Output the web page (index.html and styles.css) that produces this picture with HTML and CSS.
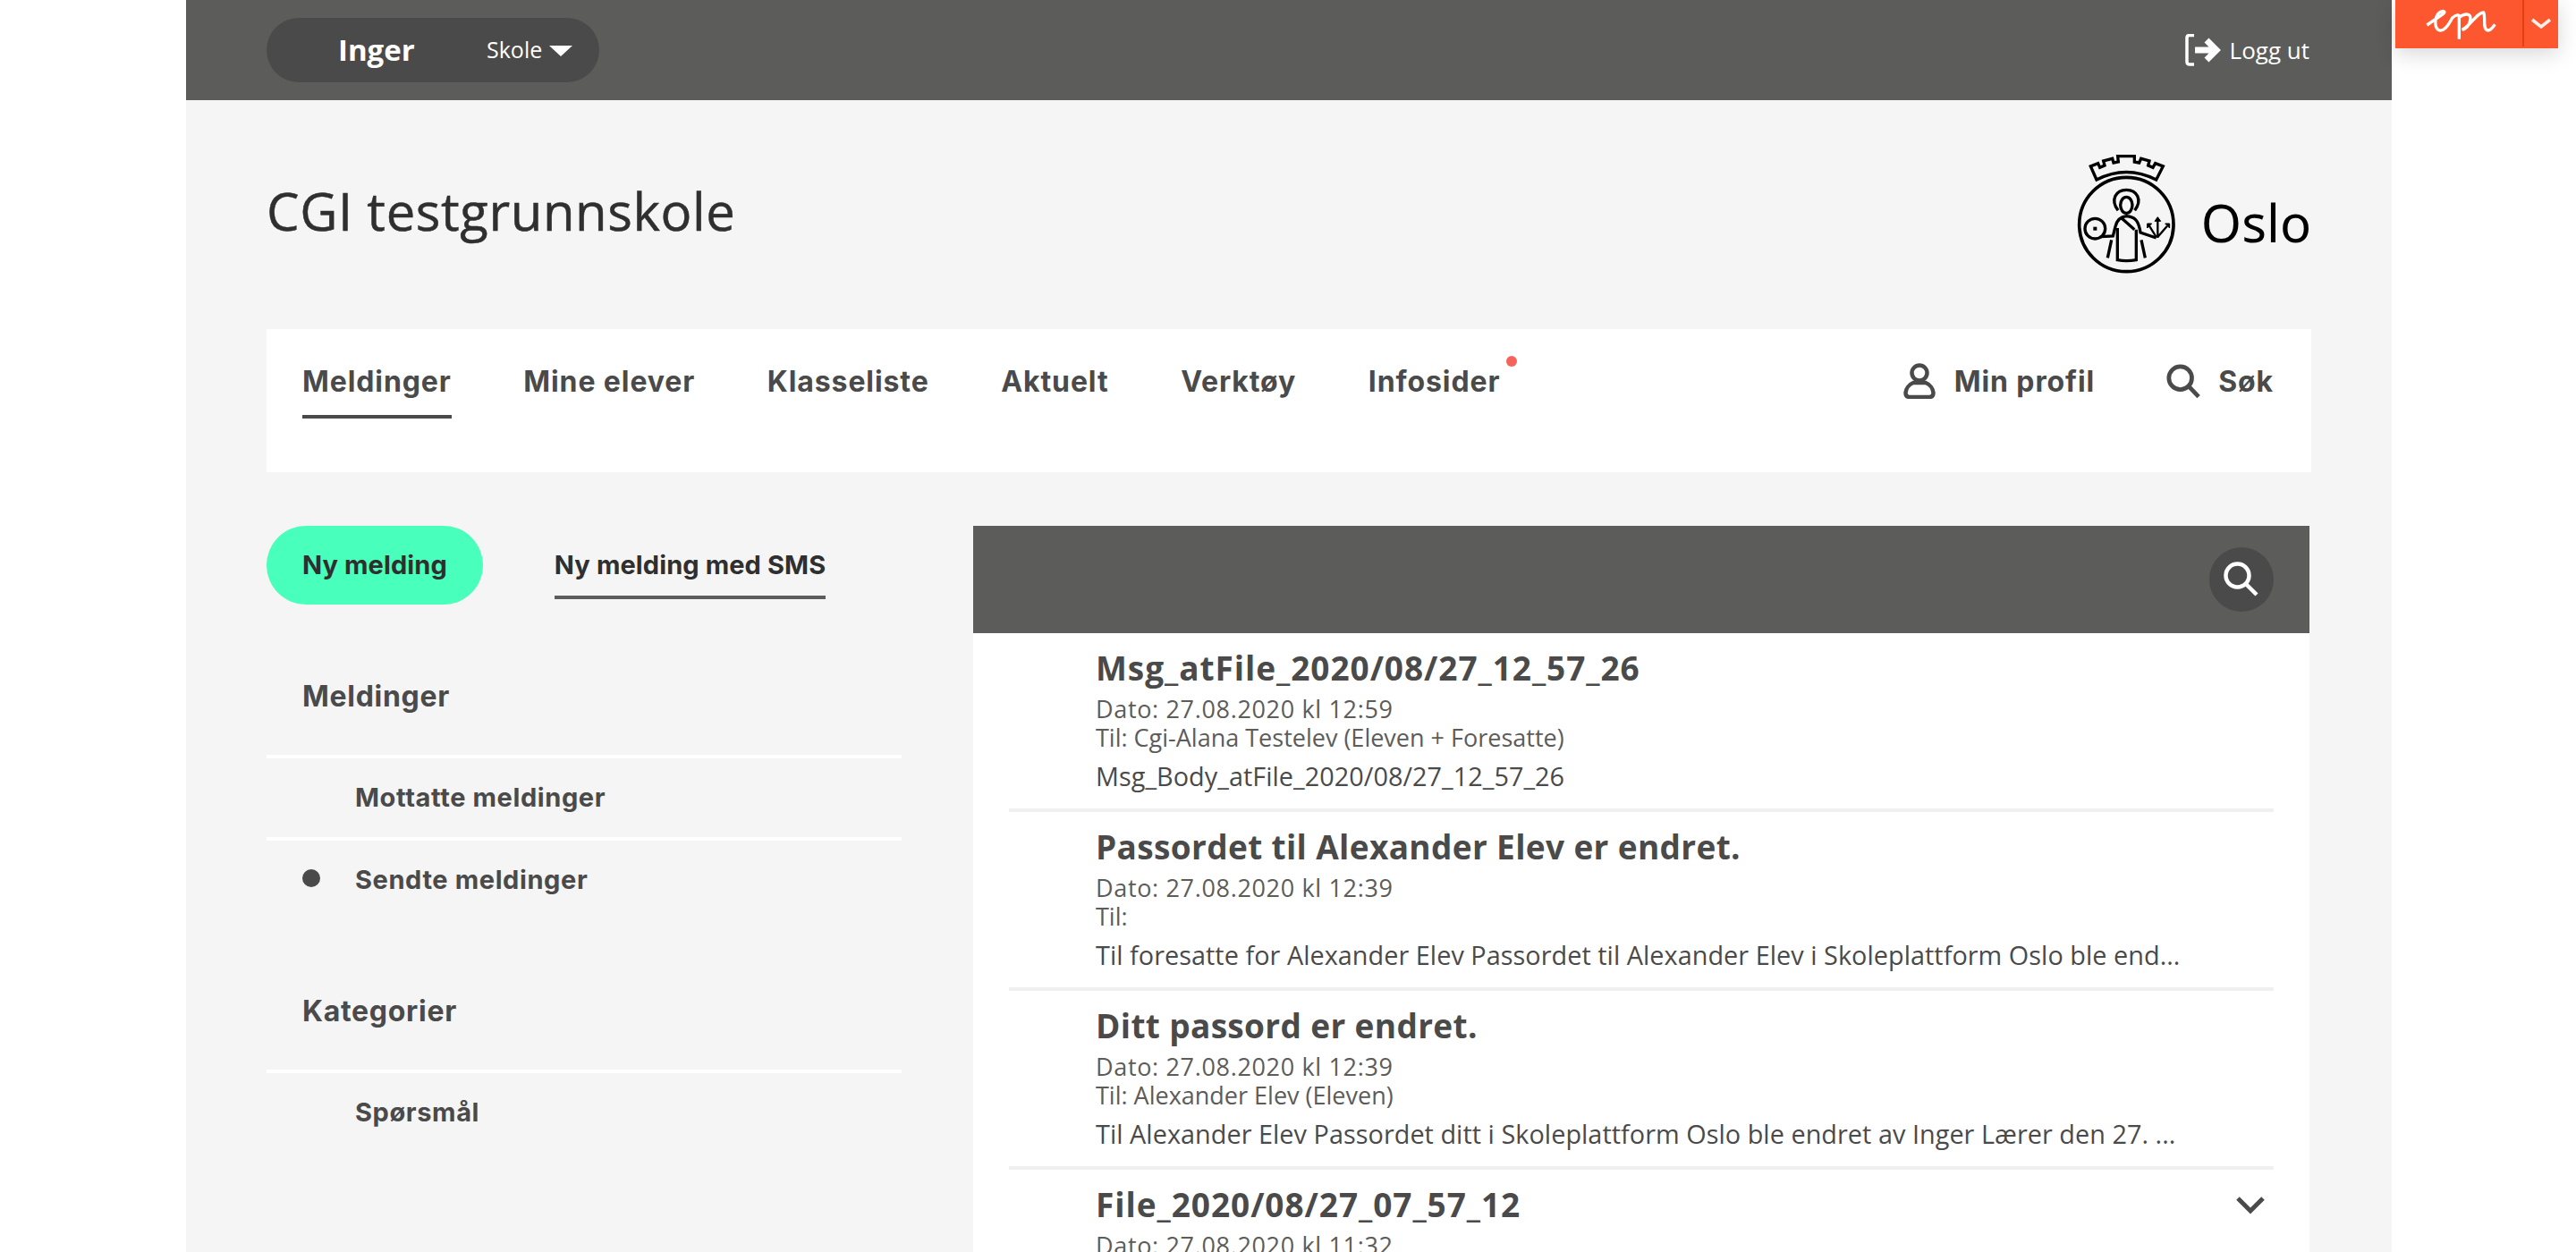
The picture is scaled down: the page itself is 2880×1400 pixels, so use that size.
FILE: index.html
```html
<!DOCTYPE html>
<html lang="no">
<head>
<meta charset="utf-8">
<title>CGI testgrunnskole</title>
<link rel="stylesheet" href="styles.css">
</head>
<body>
<div class="page">
  <header class="topbar">
    <div class="pill">
      <span class="pill-name">Inger</span>
      <span class="pill-role">Skole</span>
      <svg class="caret" viewBox="0 0 26 12"><path d="M0 0H26L13 12Z" fill="#fff"/></svg>
    </div>
    <a class="logout">
      <svg class="logout-icon" viewBox="0 0 40 36" fill="none" stroke="#fff" stroke-linejoin="miter">
        <path d="M10 1.5H5Q2 1.5 2 4.5V31Q2 34 5 34H10" stroke-width="3.5"/>
        <path d="M11 18H33M24 7L35 18L24 29" stroke-width="7"/>
      </svg>
      <span>Logg ut</span>
    </a>
  </header>

  <div class="brand">
    <h1 class="school">CGI testgrunnskole</h1>
    <div class="oslo">
      <svg class="emblem" viewBox="60 30 360 420" fill="none" stroke="#000" stroke-width="10">
        <path d="M135 123L115 78L140 68L146 82L162 75L158 60L188 52L192 66L208 63L206 44H262V63L278 66L284 52L312 60L308 75L324 82L332 68L358 78L335 123Q235 72 135 123Z"/>
        <circle cx="235" cy="273" r="158" stroke-width="11"/>
        <path d="M207 226C180 190 200 157 235 157C270 157 290 190 263 226"/>
        <ellipse cx="235" cy="208" rx="20" ry="27"/>
        <path d="M150 314L190 312L198 280C203 258 216 247 235 245C262 247 276 258 282 300L335 318M215 248L262 290"/>
        <path d="M205 285V392Q235 398 268 392V290"/>
        <path d="M185 325L172 385M285 325L298 385"/>
        <circle cx="130" cy="287" r="34"/>
        <rect x="124" y="281" width="12" height="12" fill="#000" stroke="none"/>
        <path d="M340 318V258M335 315L312 278M340 315L372 278" stroke-width="7"/>
        <path d="M330 262L340 248L350 262ZM305 285V270H320ZM365 270H380V285Z" fill="#000" stroke-width="3"/>
      </svg>
      <span class="oslo-word">Oslo</span>
    </div>
  </div>

  <nav class="mainnav">
    <ul class="nav-list">
      <li class="nav-item is-current">Meldinger</li>
      <li class="nav-item">Mine elever</li>
      <li class="nav-item">Klasseliste</li>
      <li class="nav-item">Aktuelt</li>
      <li class="nav-item">Verktøy</li>
      <li class="nav-item has-dot">Infosider</li>
    </ul>
    <div class="nav-tools">
      <a class="tool">
        <svg class="tool-icon" viewBox="0 0 36 40" fill="none" stroke="#4a4a4a" stroke-width="4.5">
          <circle cx="18" cy="11" r="8.5"/>
          <path d="M11 22H25C30 24 33 29 33.500 33C33.500 36 32 38 29 38H7C4 38 2.500 36 2.500 33C3 29 6 24 11 22Z"/>
        </svg>
        <span>Min profil</span>
      </a>
      <a class="tool">
        <svg class="tool-icon" viewBox="0 0 40 40" fill="none" stroke="#4a4a4a" stroke-width="5">
          <circle cx="16.500" cy="16.500" r="13.500"/>
          <path d="M26.500 26.500L38 38.500"/>
        </svg>
        <span>Søk</span>
      </a>
    </div>
  </nav>

  <div class="content">
    <aside class="side">
      <div class="actions">
        <a class="btn-primary">Ny melding</a>
        <a class="btn-link">Ny melding med SMS</a>
      </div>
      <h2 class="side-head">Meldinger</h2>
      <ul class="side-list">
        <li class="side-item">Mottatte meldinger</li>
        <li class="side-item is-active">Sendte meldinger</li>
      </ul>
      <h2 class="side-head side-head-next">Kategorier</h2>
      <ul class="side-list">
        <li class="side-item">Spørsmål</li>
      </ul>
    </aside>

    <main class="messages">
      <div class="msg-bar">
        <button class="msg-search">
          <svg viewBox="0 0 40 40" class="msg-search-icon" fill="none" stroke="#fff" stroke-width="4.500">
            <circle cx="15.500" cy="15.500" r="13"/>
            <path d="M25 25L37 37"/>
          </svg>
        </button>
      </div>
      <article class="msg">
        <h3 class="msg-title msg-title-num">Msg_atFile_2020/08/27_12_57_26</h3>
        <p class="msg-meta msg-date">Dato: 27.08.2020 kl 12:59</p>
        <p class="msg-meta">Til: Cgi-Alana Testelev (Eleven + Foresatte)</p>
        <p class="msg-body">Msg_Body_atFile_2020/08/27_12_57_26</p>
      </article>
      <article class="msg">
        <h3 class="msg-title">Passordet til Alexander Elev er endret.</h3>
        <p class="msg-meta msg-date">Dato: 27.08.2020 kl 12:39</p>
        <p class="msg-meta">Til:</p>
        <p class="msg-body">Til foresatte for Alexander Elev Passordet til Alexander Elev i Skoleplattform Oslo ble end...</p>
      </article>
      <article class="msg">
        <h3 class="msg-title">Ditt passord er endret.</h3>
        <p class="msg-meta msg-date">Dato: 27.08.2020 kl 12:39</p>
        <p class="msg-meta">Til: Alexander Elev (Eleven)</p>
        <p class="msg-body">Til Alexander Elev Passordet ditt i Skoleplattform Oslo ble endret av Inger Lærer den 27. ...</p>
      </article>
      <article class="msg">
        <svg class="msg-chevron" viewBox="0 0 32 20" fill="none" stroke="#4a4a4a" stroke-width="5"><path d="M2 2L16 16L30 2"/></svg>
        <h3 class="msg-title msg-title-num">File_2020/08/27_07_57_12</h3>
        <p class="msg-meta msg-date">Dato: 27.08.2020 kl 11:32</p>
      </article>
    </main>
  </div>
</div>

<div class="epi">
  <svg class="epi-logo" viewBox="84 0 426 162" fill="none" stroke="#fff" stroke-width="10">
    <path d="M190 84L240 50C258 38 245 34 232 42C218 52 212 88 228 100C245 110 262 85 275 60C288 48 298 48 298 55M298 55V131M298 58C320 42 340 45 335 68C332 88 318 98 308 100C335 88 360 40 380 42C388 60 375 100 395 102C405 102 412 90 418 82"/>
  </svg>
  <div class="epi-toggle">
    <svg class="epi-chevron" viewBox="0 0 60 30" fill="none" stroke="#fff" stroke-width="9" opacity="0.9"><path d="M5 5L30 25L55 5"/></svg>
  </div>
</div>
</body>
</html>
```

FILE: styles.css
```css
* { box-sizing: border-box; }
html, body { margin: 0; padding: 0; height: 1400px; overflow: hidden; background: #fff; }
body { font-family: "Open Sans", "Liberation Sans", sans-serif; color: #4a4a4a; position: relative; }
h1, h2, h3, p, ul { margin: 0; padding: 0; font-weight: inherit; font-size: inherit; }
ul { list-style: none; }

.page { width: 2466px; height: 1400px; margin-left: 208px; background: #f5f5f5; overflow: hidden; }

.topbar { height: 112px; padding: 0 92px 0 90px; background: #5c5c5a; display: flex; align-items: center; justify-content: space-between; }
.pill { width: 372px; height: 72px; border-radius: 36px; background: #4a4a4a; color: #fff; display: flex; align-items: center; padding-left: 80px; }
.pill-name { font-size: 33px; font-weight: 700; width: 166px; margin-top: -2px; }
.pill-role { font-size: 25px; width: 70px; margin-top: -2px; }
.caret { width: 26px; height: 12px; display: block; margin-top: 2px; }
.logout { display: flex; align-items: center; gap: 10px; color: #fff; font-size: 26px; }
.logout-icon { width: 40px; height: 36px; display: block; }

.brand { height: 256px; padding: 0 90px 0 90px; display: flex; justify-content: space-between; align-items: flex-start; }
.school { font-size: 58px; line-height: 80px; margin-top: 84px; color: #2f2f2f; font-weight: 500; letter-spacing: 0.6px; -webkit-text-stroke: 0.5px #2f2f2f; }
.oslo { display: flex; align-items: center; gap: 22px; margin-top: 58px; }
.emblem { width: 120px; height: 140px; display: block; }
.oslo-word { font-size: 58px; line-height: 80px; margin-top: 18px; color: #000; font-family: "Noto Sans", sans-serif; }

.mainnav { height: 160px; margin: 0 90px 0 90px; padding: 0 42px 0 40px; background: #fff; display: flex; justify-content: space-between; }
.nav-list { display: flex; gap: 80.6px; }
.nav-item { font-family: Inter, sans-serif; font-size: 32px; font-weight: 700; letter-spacing: 0.9px; height: 100px; line-height: 118px; position: relative; }
.nav-item.is-current { border-bottom: 4px solid #4a4a4a; }
.nav-item.has-dot::after { content: ""; position: absolute; left: 154px; top: 30px; width: 12px; height: 12px; border-radius: 50%; background: #f5635b; }
.nav-tools { display: flex; gap: 80px; }
.tool { display: flex; align-items: center; gap: 20px; height: 116px; font-family: Inter, sans-serif; font-size: 32px; font-weight: 700; letter-spacing: 0.9px; }
.tool-icon { width: 38px; height: 40px; display: block; }

.content { display: flex; margin: 60px 92px 0 90px; gap: 80px; }
.side { width: 710px; flex: none; }
.actions { display: flex; align-items: flex-start; gap: 80px; margin-bottom: 46px; }
.btn-primary { height: 88px; line-height: 88px; padding: 0 40px; border-radius: 44px; background: #48ffbb; color: #2f2f2f; font-family: Inter, sans-serif; font-size: 29px; font-weight: 700; letter-spacing: 0.1px; }
.btn-link { height: 82px; line-height: 88px; border-bottom: 4px solid #5c5c5a; color: #2f2f2f; font-family: Inter, sans-serif; font-size: 29px; font-weight: 700; letter-spacing: 0.1px; }
.side-head { height: 122px; line-height: 114px; padding-left: 40px; font-family: Inter, sans-serif; font-size: 32px; font-weight: 700; letter-spacing: 0.7px; }
.side-head-next { margin-top: 60px; height: 108px; line-height: 86px; }
.side-list { display: block; }
.side-item { height: 92px; border-top: 4px solid #fff; padding-left: 99px; line-height: 88px; font-family: Inter, sans-serif; font-size: 29px; font-weight: 700; letter-spacing: 0.6px; position: relative; }
.side-item.is-active::before { content: ""; position: absolute; left: 40px; top: 32px; width: 20px; height: 20px; border-radius: 50%; background: #4a4a4a; }

.messages { width: 1494px; flex: none; background: #fff; }
.msg-bar { height: 120px; background: #5c5c5a; display: flex; align-items: center; justify-content: flex-end; padding-right: 40px; }
.msg-search { width: 72px; height: 72px; border: 0; padding: 0; border-radius: 50%; background: #4a4a4a; display: flex; align-items: center; justify-content: center; }
.msg-search-icon { width: 40px; height: 40px; display: block; }
.msg { margin: 0 40px; padding: 15px 0 0 97px; height: 200px; border-bottom: 4px solid #f0f0f0; position: relative; }
.msg-title { font-size: 37px; line-height: 48px; font-weight: 700; letter-spacing: 0.35px; margin-bottom: 6px; }
.msg-title-num { letter-spacing: 0.95px; }
.msg-meta { font-size: 27px; line-height: 32px; color: #5c5c5a; }
.msg-date { letter-spacing: 0.66px; }
.msg-body { font-size: 28.8px; line-height: 40px; margin-top: 7px; letter-spacing: 0.05px; }
.msg-chevron { position: absolute; right: 10px; top: 30px; width: 32px; height: 20px; }

.epi { position: absolute; left: 2678px; top: 0; width: 182px; height: 54px; background: #fc572e; box-shadow: 0 6px 24px rgba(0,0,0,.16); display: flex; }
.epi-logo { width: 142px; height: 54px; display: block; }
.epi-toggle { flex: 1; height: 52px; border-left: 2px solid #e0420f; display: flex; align-items: center; justify-content: center; }
.epi-chevron { width: 24px; height: 14px; display: block; }
```
